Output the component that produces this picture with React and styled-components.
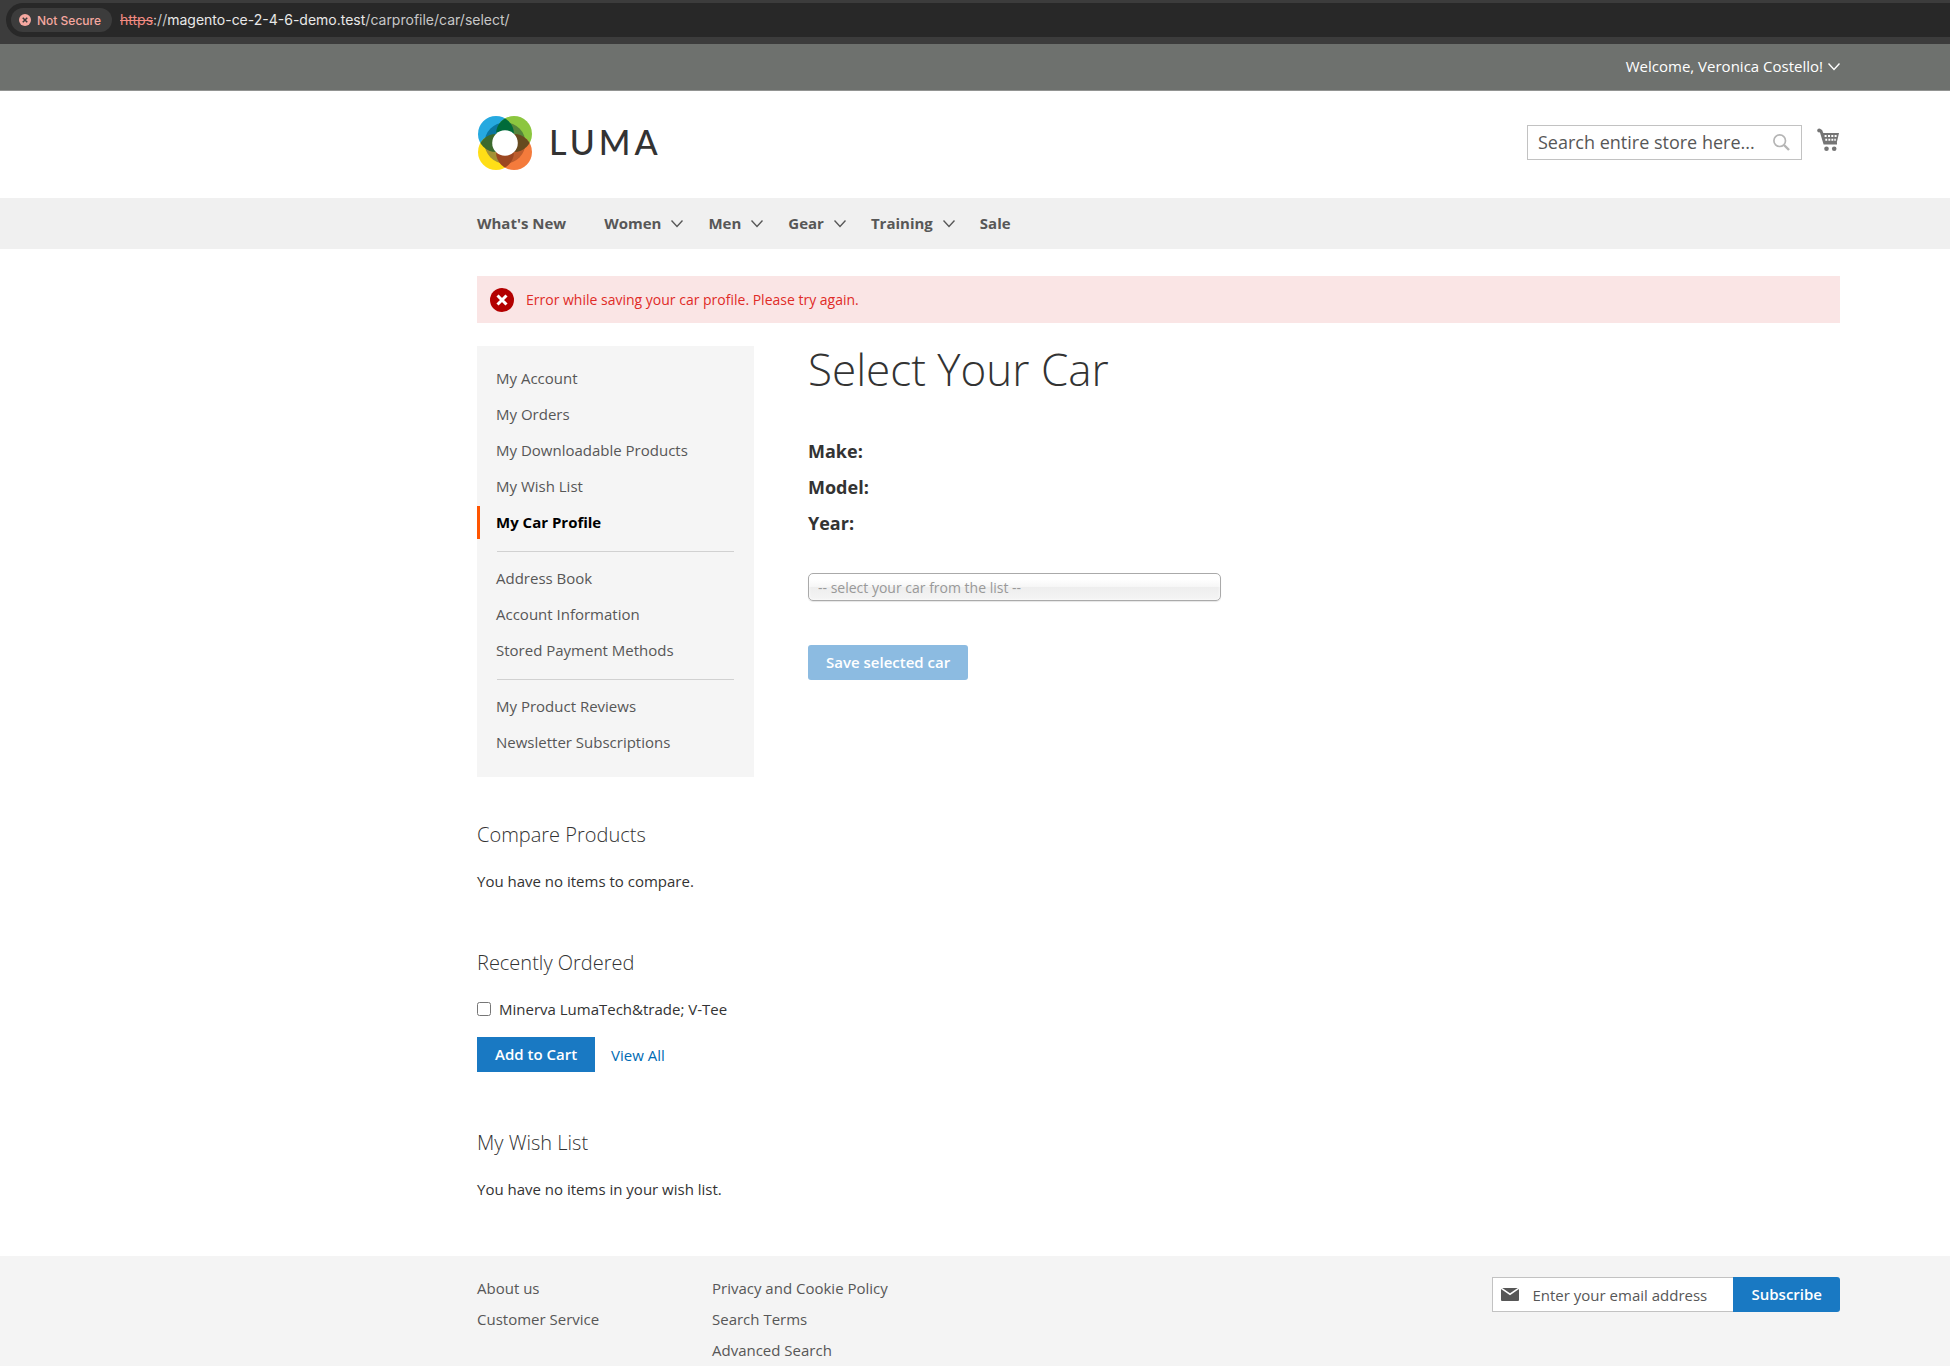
import React from "react";
import styled, { createGlobalStyle, css } from "styled-components";

const GlobalStyle = createGlobalStyle`
  *, *::before, *::after { box-sizing: border-box; }
  body {
    margin: 0;
    background: #fff;
    color: #333;
    font-family: "Open Sans", "Noto Sans", sans-serif;
    font-size: 15px;
    line-height: 22px;
  }
  a { color: inherit; text-decoration: none; }
  ul { list-style: none; margin: 0; padding: 0; }
  h1, h2, p, dl, dt, dd { margin: 0; }
  button, input, select { font-family: inherit; }
`;

const Page = styled.div`
  display: flex;
  flex-direction: column;
  min-height: 100vh;
`;

const gutters = css`
  padding-left: 477px;
  padding-right: 110px;
`;

/* Browser address bar */
const BrowserBar = styled.div`
  display: flex;
  height: 44px;
  padding: 3px 0 7px 6px;
  background: #3c3c3c;
`;

const AddressField = styled.div`
  display: flex;
  flex: 1;
  align-items: center;
  gap: 8px;
  padding-left: 5px;
  border-radius: 17px 0 0 17px;
  background: #282828;
  font-family: Inter, sans-serif;
`;

const SecurityChip = styled.button`
  display: flex;
  align-items: center;
  gap: 6px;
  height: 24px;
  padding: 0 11px 0 8px;
  border: 0;
  border-radius: 12px;
  background: #3c3c3c;
  color: #f6a8a0;
  font-family: Inter, sans-serif;
  font-size: 12px;
  font-weight: 500;
`;

const Address = styled.span`
  color: #c7c7c7;
  font-size: 14px;
`;

const Scheme = styled.s`
  color: #f28b82;
`;

const Host = styled.span`
  color: #e8e8e8;
`;

/* Header */
const AccountPanel = styled.div`
  ${gutters}
  display: flex;
  justify-content: flex-end;
  height: 47px;
  border-bottom: 1px solid #929492;
  background: #6e716e;
`;

const AccountMenu = styled.button`
  display: flex;
  align-items: center;
  gap: 5px;
  height: 44px;
  padding: 0;
  border: 0;
  background: none;
  color: #fff;
  font-size: 15px;
`;

const Header = styled.header`
  ${gutters}
  display: flex;
  align-items: center;
  justify-content: space-between;
  height: 107px;
  padding-bottom: 3px;
`;

const LogoLink = styled.a`
  display: flex;
  align-items: center;
  gap: 17px;
  padding-left: 1px;
`;

const Wordmark = styled.span`
  padding-bottom: 2px;
  color: #333;
  font-family: Lato, sans-serif;
  font-size: 34px;
  font-weight: 500;
  letter-spacing: 4px;
  line-height: 40px;
`;

const HeaderTools = styled.div`
  display: flex;
  align-items: center;
  gap: 15px;
  padding-bottom: 2px;
`;

const SearchForm = styled.form`
  display: flex;
  align-items: center;
  width: 275px;
  height: 35px;
  padding: 0 11px 0 10px;
  border: 1px solid #c2c2c2;
  background: #fff;
`;

const TextInput = styled.input`
  flex: 1;
  min-width: 0;
  padding: 0;
  border: 0;
  outline: 0;
  background: none;
  color: #333;
  font-size: ${(p) => (p.$large ? "18px" : "15px")};
  &::placeholder { color: #575757; opacity: 1; }
`;

const IconButton = styled.button`
  display: flex;
  padding: 0;
  border: 0;
  background: none;
`;

const Nav = styled.nav`
  ${gutters}
  background: #f0f0f0;
`;

const NavList = styled.ul`
  display: flex;
  align-items: center;
  gap: 25px;
  height: 51px;
  padding-bottom: 2px;
`;

const NavLink = styled.a`
  display: flex;
  align-items: center;
  gap: 10px;
  padding-right: ${(p) => (p.$plain ? "13px" : "0")};
  color: #575757;
  font-weight: 700;
`;

/* Content */
const Content = styled.main`
  ${gutters}
  padding-top: 27px;
  padding-bottom: 56px;
`;

const ErrorMessage = styled.div`
  display: flex;
  align-items: center;
  gap: 12px;
  height: 47px;
  margin-bottom: 23px;
  padding: 0 13px;
  background: #fae5e5;
  color: #e02b27;
  font-size: 14px;
`;

const Columns = styled.div`
  display: grid;
  grid-template-columns: 277px 1fr;
  gap: 54px;
`;

const AccountNav = styled.nav`
  display: flex;
  flex-direction: column;
  padding: 16px 0 18px;
  background: #f5f5f5;
`;

const AccountGroup = styled.ul`
  display: flex;
  flex-direction: column;
  gap: 3px;
  & + & {
    &::before {
      content: "";
      height: 1px;
      margin: 12px 20px 7px;
      background: #d1d1d1;
    }
  }
`;

const AccountLink = styled.a`
  display: block;
  padding: 0 16px;
  border-left: 3px solid ${(p) => (p.$current ? "#ff5501" : "transparent")};
  color: ${(p) => (p.$current ? "#000" : "#575757")};
  font-weight: ${(p) => (p.$current ? 700 : 400)};
  line-height: 33px;
`;

const Block = styled.section`
  margin-top: ${(p) => (p.$first ? "44px" : "57px")};
`;

const BlockTitle = styled.h2`
  margin-bottom: 21px;
  font-size: 20px;
  font-weight: 300;
  line-height: 28px;
`;

const ItemLabel = styled.label`
  display: flex;
  align-items: center;
  gap: 8px;
  margin-bottom: 17px;
`;

const Checkbox = styled.input`
  width: 14px;
  height: 14px;
  margin: 0;
`;

const Actions = styled.div`
  display: flex;
  align-items: center;
  gap: 16px;
`;

const TextLink = styled.a`
  color: #006bb4;
`;

const PrimaryButton = styled.button`
  height: 35px;
  padding: 0 18px 2px;
  border: 0;
  border-radius: ${(p) => p.$radius || "0"};
  background: #1979c3;
  color: #fff;
  font-size: 15px;
  font-weight: 600;
  &:disabled { background: #8cbbe1; }
`;

const PageTitle = styled.h1`
  margin-bottom: 41px;
  font-size: 44px;
  font-weight: 300;
  line-height: 46px;
`;

const CarForm = styled.form`
  display: flex;
  flex-direction: column;
  align-items: flex-start;
`;

const CarDetails = styled.dl`
  margin-bottom: 32px;
  font-size: 18px;
  font-weight: 700;
  line-height: 36px;
`;

const CarSelect = styled.select`
  width: 413px;
  height: 28px;
  margin-bottom: 44px;
  padding: 0 9px;
  appearance: none;
  border: 1px solid #aaa;
  border-radius: 5px;
  background: linear-gradient(#fff 20%, #f6f6f6 50%, #eee 52%, #f4f4f4 100%);
  box-shadow: inset 0 0 3px #fff, 0 1px 1px rgba(0, 0, 0, 0.1);
  color: #999;
  font-size: 14px;
`;

/* Footer */
const Footer = styled.footer`
  ${gutters}
  display: grid;
  grid-template-columns: 235px 1fr auto;
  flex: 1;
  align-items: start;
  padding-top: 21px;
  background: #f4f4f4;
`;

const FooterLinks = styled.ul`
  display: flex;
  flex-direction: column;
  gap: 9px;
  color: #575757;
`;

const Newsletter = styled.form`
  display: flex;
`;

const EmailField = styled.label`
  display: flex;
  align-items: center;
  gap: 13px;
  width: 241px;
  height: 35px;
  padding-left: 8px;
  border: 1px solid #c2c2c2;
  border-right: 0;
  background: #fff;
`;

const Chevron = ({ color = "#575757" }) => (
  <svg width="12" height="10" viewBox="0 0 12 10" fill="none" stroke={color} strokeWidth="1.4" aria-hidden="true">
    <path d="M0.5 2.6 L6 8.4 L11.5 2.6" />
  </svg>
);

const LumaMark = () => (
  <svg width="54" height="54" viewBox="0 0 54 54" aria-hidden="true">
    <defs>
      <clipPath id="blue"><circle cx="18" cy="18" r="18" /></clipPath>
      <clipPath id="orange"><circle cx="36" cy="36" r="18" /></clipPath>
      <clipPath id="ring"><circle cx="27" cy="27" r="20.5" /></clipPath>
    </defs>
    <circle cx="18" cy="18" r="18" fill="#26a9e0" />
    <circle cx="36" cy="18" r="18" fill="#8cc63f" />
    <circle cx="18" cy="36" r="18" fill="#ffde17" />
    <circle cx="36" cy="36" r="18" fill="#f47b3c" />
    <g clipPath="url(#ring)">
      <rect width="27" height="27" fill="#0b76a0" />
      <rect x="27" width="27" height="27" fill="#56853b" />
      <rect y="27" width="27" height="27" fill="#a39135" />
      <rect x="27" y="27" width="27" height="27" fill="#bd5c2c" />
    </g>
    <circle cx="36" cy="18" r="18" fill="#006b3a" clipPath="url(#blue)" />
    <circle cx="18" cy="36" r="18" fill="#3c6a2e" clipPath="url(#blue)" />
    <circle cx="36" cy="18" r="18" fill="#664a1f" clipPath="url(#orange)" />
    <circle cx="18" cy="36" r="18" fill="#9c4721" clipPath="url(#orange)" />
    <circle cx="27" cy="27" r="12.8" fill="#fff" />
  </svg>
);

const SearchIcon = () => (
  <svg width="17" height="17" viewBox="0 0 17 17" fill="none" stroke="#b5b5b5" aria-hidden="true">
    <circle cx="6.7" cy="6.7" r="5.8" strokeWidth="1.7" />
    <path d="M11 11 L16 16" strokeWidth="2.4" />
  </svg>
);

const CartIcon = () => (
  <svg width="23" height="28" viewBox="0 0 23 28" fill="#757575" aria-hidden="true">
    <circle cx="2.2" cy="2.5" r="2" />
    <path d="M2 1.2 L5 1.8 L6.3 5 H22 L19.8 14.5 H20 V16.5 H6.6 Z" />
    <g fill="#fff">
      <path d="M7.6 7h2v2h-2z M11 7h2v2h-2z M14.3 7h2v2h-2z M17.6 7h2v2h-2z" />
      <path d="M8.3 10.8h1.9v2H8.3z M11.4 10.8h1.9v2h-1.9z M14.4 10.8h1.9v2h-1.9z M17.3 10.8h1.5v2h-1.5z" />
    </g>
    <circle cx="9.5" cy="20.8" r="2.3" />
    <circle cx="17.2" cy="20.8" r="2.3" />
  </svg>
);

const ErrorIcon = ({ size, fill, mark, stroke }) => (
  <svg width={size} height={size} viewBox="0 0 24 24" aria-hidden="true">
    <circle cx="12" cy="12" r="12" fill={fill} />
    <path d="M7.5 7.5 L16.5 16.5 M16.5 7.5 L7.5 16.5" stroke={mark} strokeWidth={stroke} />
  </svg>
);

const MailIcon = () => (
  <svg width="18" height="13" viewBox="0 0 18 13" fill="#575757" aria-hidden="true">
    <path d="M1.2 0 H16.8 L9 5.2 Z" />
    <path d="M0 0.9 L9 7.2 L18 0.9 V12 a1 1 0 0 1 -1 1 H1 a1 1 0 0 1 -1 -1 Z" />
  </svg>
);

const navItems = [
  { label: "What's New" },
  { label: "Women", children: true },
  { label: "Men", children: true },
  { label: "Gear", children: true },
  { label: "Training", children: true },
  { label: "Sale" },
];

const accountGroups = [
  ["My Account", "My Orders", "My Downloadable Products", "My Wish List", "My Car Profile"],
  ["Address Book", "Account Information", "Stored Payment Methods"],
  ["My Product Reviews", "Newsletter Subscriptions"],
];

const footerColumns = [
  ["About us", "Customer Service"],
  ["Privacy and Cookie Policy", "Search Terms", "Advanced Search"],
];

export default function App() {
  return (
    <Page>
      <GlobalStyle />
      <BrowserBar>
        <AddressField>
          <SecurityChip type="button">
            <ErrorIcon size={12} fill="#f6a8a0" mark="#3c3c3c" stroke={3} />
            Not Secure
          </SecurityChip>
          <Address>
            <Scheme>https</Scheme>://<Host>magento-ce-2-4-6-demo.test</Host>/carprofile/car/select/
          </Address>
        </AddressField>
      </BrowserBar>

      <AccountPanel>
        <AccountMenu type="button">
          Welcome, Veronica Costello!
          <Chevron color="#fff" />
        </AccountMenu>
      </AccountPanel>

      <Header>
        <LogoLink href="#" aria-label="Luma">
          <LumaMark />
          <Wordmark>LUMA</Wordmark>
        </LogoLink>
        <HeaderTools>
          <SearchForm role="search">
            <TextInput $large type="text" aria-label="Search" placeholder="Search entire store here..." />
            <IconButton type="button" aria-label="Search">
              <SearchIcon />
            </IconButton>
          </SearchForm>
          <IconButton type="button" aria-label="My Cart">
            <CartIcon />
          </IconButton>
        </HeaderTools>
      </Header>

      <Nav aria-label="Main">
        <NavList>
          {navItems.map((item) => (
            <li key={item.label}>
              <NavLink href="#" $plain={!item.children}>
                {item.label}
                {item.children && <Chevron />}
              </NavLink>
            </li>
          ))}
        </NavList>
      </Nav>

      <Content>
        <ErrorMessage role="alert">
          <ErrorIcon size={24} fill="#b30000" mark="#fff" stroke={3} />
          Error while saving your car profile. Please try again.
        </ErrorMessage>
        <Columns>
          <aside>
            <AccountNav aria-label="Account">
              {accountGroups.map((group) => (
                <AccountGroup key={group[0]}>
                  {group.map((label) => (
                    <li key={label}>
                      <AccountLink href="#" $current={label === "My Car Profile"}>
                        {label}
                      </AccountLink>
                    </li>
                  ))}
                </AccountGroup>
              ))}
            </AccountNav>

            <Block $first>
              <BlockTitle>Compare Products</BlockTitle>
              <p>You have no items to compare.</p>
            </Block>

            <Block>
              <BlockTitle>Recently Ordered</BlockTitle>
              <ItemLabel>
                <Checkbox type="checkbox" />
                {"Minerva LumaTech&trade; V-Tee"}
              </ItemLabel>
              <Actions>
                <PrimaryButton type="button">Add to Cart</PrimaryButton>
                <TextLink href="#">View All</TextLink>
              </Actions>
            </Block>

            <Block>
              <BlockTitle>My Wish List</BlockTitle>
              <p>You have no items in your wish list.</p>
            </Block>
          </aside>

          <section>
            <PageTitle>Select Your Car</PageTitle>
            <CarForm>
              <CarDetails>
                <dt>Make:</dt>
                <dt>Model:</dt>
                <dt>Year:</dt>
              </CarDetails>
              <CarSelect aria-label="Car">
                <option>-- select your car from the list --</option>
              </CarSelect>
              <PrimaryButton type="submit" disabled $radius="3px">
                Save selected car
              </PrimaryButton>
            </CarForm>
          </section>
        </Columns>
      </Content>

      <Footer>
        {footerColumns.map((links) => (
          <FooterLinks key={links[0]}>
            {links.map((label) => (
              <li key={label}>
                <a href="#">{label}</a>
              </li>
            ))}
          </FooterLinks>
        ))}
        <Newsletter>
          <EmailField>
            <MailIcon />
            <TextInput type="email" aria-label="Email address" placeholder="Enter your email address" />
          </EmailField>
          <PrimaryButton type="submit" $radius="0 3px 3px 0">
            Subscribe
          </PrimaryButton>
        </Newsletter>
      </Footer>
    </Page>
  );
}
